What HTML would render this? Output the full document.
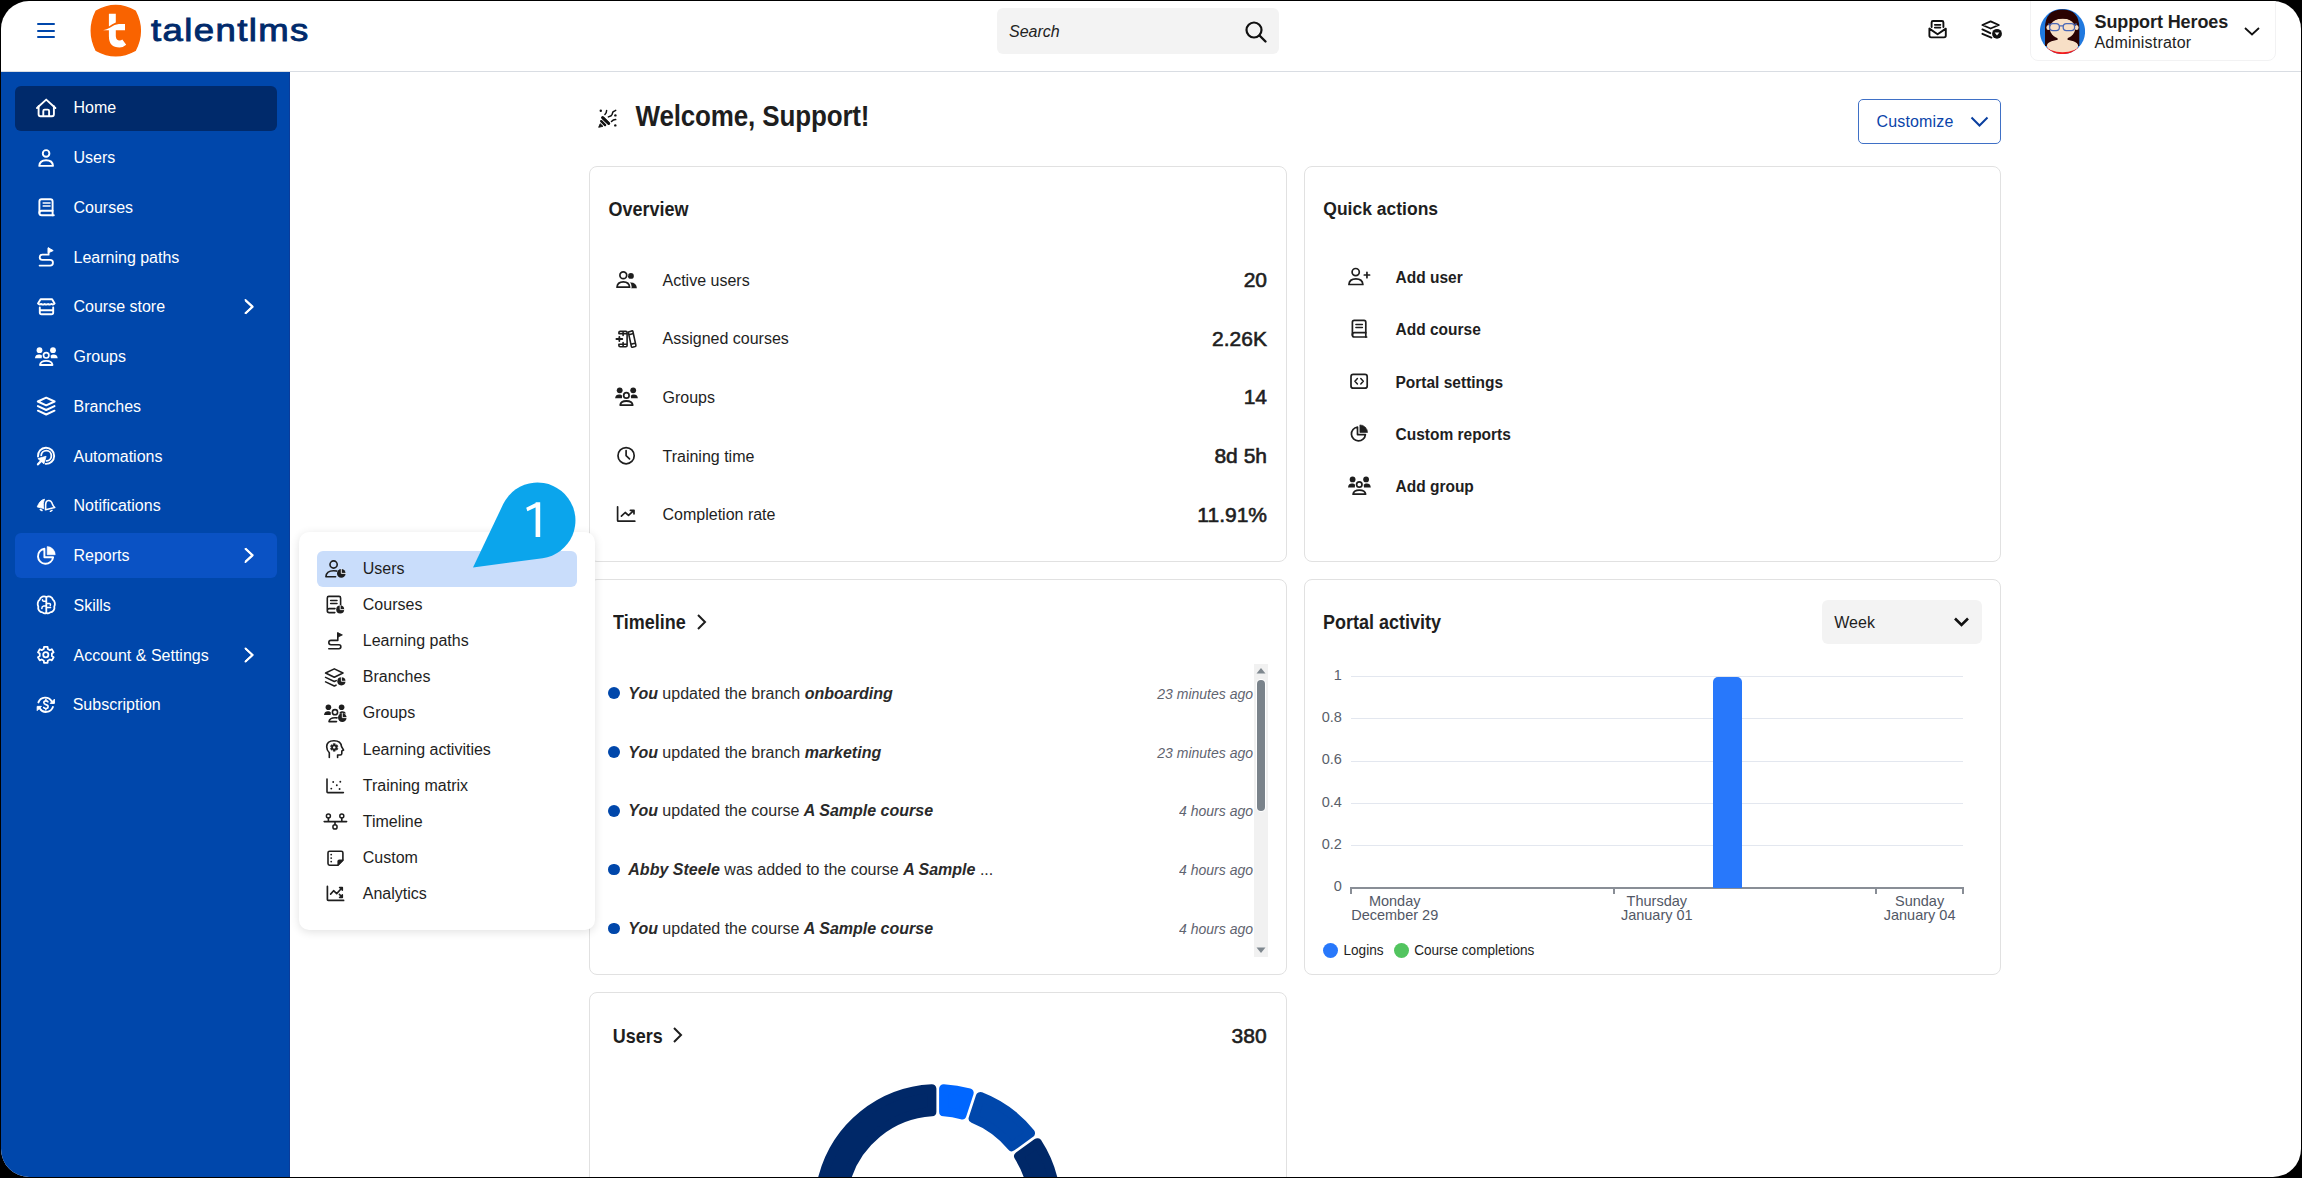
<!DOCTYPE html>
<html><head><meta charset="utf-8"><style>
html,body{margin:0;padding:0;}
body{width:2302px;height:1178px;background:#000;overflow:hidden;position:relative;}
#pg{position:absolute;left:0;top:0;width:2302px;height:1178px;background:#fff;clip-path:inset(1px round 28px);overflow:hidden;font-family:"Liberation Sans",sans-serif;}
.t{position:absolute;line-height:1;white-space:nowrap;}
.r{position:absolute;}
</style></head><body><div id="pg">
<div class="r" style="left:0px;top:71px;width:2302px;height:1px;background:#d9dde3;border-radius:0px;"></div>
<div class="r" style="left:37px;top:22.5px;width:18px;height:2.2px;background:#0047ab;border-radius:1px;"></div>
<div class="r" style="left:37px;top:29.5px;width:18px;height:2.2px;background:#0047ab;border-radius:1px;"></div>
<div class="r" style="left:37px;top:36px;width:18px;height:2.2px;background:#0047ab;border-radius:1px;"></div>
<svg class="r" style="left:0;top:0" width="160" height="70"><path d="M96.2 11.2 Q115.8 0 135.2 11.2 Q145.4 30.8 135.2 50.4 Q115.8 61.2 96.2 50.4 Q86.4 30.8 96.2 11.2 Z" fill="#f96300" stroke="#f96300" stroke-width="1.5" stroke-linejoin="round"/><path d="M108.9 13.8 H115.8 V22.6 Q112.2 24.2 108.9 26.6 Z" fill="#fff"/><path d="M103.1 30.3 Q106.8 29.9 110.2 27.6 Q114.6 24 118.8 23.9 H125 V30.3 H115.8 V36.2 Q116.2 40.6 119.6 40.6 Q121.1 40.6 122.3 39.6 L126.2 44.8 Q123.3 47.5 119.6 47.5 Q108.9 47.5 108.9 36.2 V30.3 Z" fill="#fff"/></svg>
<div class="t" style="left:150.5px;top:15px;font-size:31.5px;color:#002a6b;letter-spacing:1.2px;-webkit-text-stroke:0.9px #002a6b;transform:scale(1.16,1);transform-origin:0 27px;">talentlms</div>
<div class="r" style="left:997px;top:8px;width:282px;height:46px;background:#f3f3f3;border-radius:6px;"></div>
<div class="t" style="left:1009px;top:23.5px;font-size:16px;font-style:italic;color:#222;">Search</div>
<svg class="r" style="left:1244px;top:20px;" width="24" height="24" viewBox="0 0 24 24"><circle cx="10" cy="10" r="7.5" fill="none" stroke="#111" stroke-width="2.2"/><path d="M15.5 15.5 L21.5 21.5" stroke="#111" stroke-width="2.4" stroke-linecap="round"/></svg>
<svg class="r" style="left:0;top:0" width="2302" height="70"><path d="M1931.6 27 V22.4 Q1931.6 21 1933 21 H1942 Q1943.4 21 1943.4 22.4 V27" fill="none" stroke="#111" stroke-width="1.9" stroke-linecap="round"/><path d="M1934.8 24.8 H1940.4 M1934.8 27.6 H1940.4" fill="none" stroke="#111" stroke-width="1.7" stroke-linecap="round"/><path d="M1929.4 28.6 V35.6 Q1929.4 37.4 1931.2 37.4 H1944 Q1945.8 37.4 1945.8 35.6 V28.6 L1937.6 34.3 Z" fill="none" stroke="#111" stroke-width="1.9" stroke-linejoin="round"/><path d="M1990.6 21.4 L1998.8 25 L1990.6 28.5 L1982.4 25 Z" fill="none" stroke="#111" stroke-width="1.9" stroke-linejoin="round"/><path d="M1982.4 29.4 L1990.3 33.2 M1982.4 33.8 L1991.4 37.6" fill="none" stroke="#111" stroke-width="1.9" stroke-linecap="round"/><circle cx="1997" cy="33.8" r="4.9" fill="#111"/><path d="M1994.6 32.4 H1999.4 L1997 35.6 Z" fill="#fff"/></svg>
<div class="r" style="left:2030px;top:-8px;width:245.5px;height:69px;background:#fff;border:1px solid #f2f2f3;box-sizing:border-box;border-radius:8px;"></div>
<svg class="r" style="left:2040px;top:9px;" width="45" height="45" viewBox="0 0 45 45"><defs><clipPath id="av"><circle cx="22.5" cy="22.5" r="22.6"/></clipPath></defs><g clip-path="url(#av)"><rect width="45" height="45" fill="#2079df"/><path d="M5 37 V19 Q5 0.4 22.5 0.4 Q39.3 0.4 39.3 19 V37 Z" fill="#2a0202"/><ellipse cx="22.5" cy="44" rx="19.5" ry="9" fill="#f41c1c"/><ellipse cx="22.5" cy="36.8" rx="15.6" ry="6.4" fill="#f7dfc6"/><rect x="17.6" y="27" width="10" height="9" fill="#f7dfc6"/><ellipse cx="22.5" cy="19.6" rx="12.6" ry="10.4" fill="#f7dfc6"/><ellipse cx="8.4" cy="18.5" rx="2" ry="2.6" fill="#f7dfc6"/><ellipse cx="36.6" cy="18.5" rx="2" ry="2.6" fill="#f7dfc6"/><path d="M8.5 15 Q10 5.5 22.5 5.5 Q35 5.5 36.5 15 Q31 9.6 22.5 9.8 Q14 9.8 8.5 15 Z" fill="#2a0202"/><rect x="9.6" y="14.6" width="9.8" height="7" rx="3.3" fill="none" stroke="#4a68b8" stroke-width="1.3"/><rect x="23.2" y="14.6" width="11.4" height="7" rx="3.3" fill="none" stroke="#4a68b8" stroke-width="1.3"/><path d="M19.4 16.8 H23.2 M8 15.2 H9.8 M34.6 15.2 H37" stroke="#4a68b8" stroke-width="1.2"/></g></svg>
<div class="t" style="left:2094.5px;top:12.5px;font-size:18px;font-weight:bold;color:#1e1e1e;letter-spacing:-0.1px;">Support Heroes</div>
<div class="t" style="left:2094.5px;top:35px;font-size:16px;color:#1e1e1e;letter-spacing:0.2px;">Administrator</div>
<svg class="r" style="left:2243px;top:26px;" width="18" height="11" viewBox="0 0 18 11"><path d="M2 2 L9 8.5 L16 2" fill="none" stroke="#111" stroke-width="1.8"/></svg>
<div class="r" style="left:0px;top:72px;width:290px;height:1106px;background:#0047ab;border-radius:0px;"></div>
<div class="r" style="left:289px;top:72px;width:1px;height:1106px;background:#0a3c9a;border-radius:0px;"></div>
<div class="r" style="left:15px;top:86px;width:262px;height:45px;background:#002a6b;border-radius:6px;"></div>
<div class="r" style="left:15px;top:533px;width:262px;height:44.5px;background:#0a52c4;border-radius:6px;"></div>
<div class="t" style="left:73.5px;top:100px;font-size:16px;color:#fff;">Home</div>
<div class="t" style="left:73.5px;top:150px;font-size:16px;color:#fff;">Users</div>
<div class="t" style="left:73.5px;top:200px;font-size:16px;color:#fff;">Courses</div>
<div class="t" style="left:73.5px;top:250px;font-size:16px;color:#fff;">Learning paths</div>
<div class="t" style="left:73.5px;top:299px;font-size:16px;color:#fff;">Course store</div>
<svg class="r" style="left:243px;top:298.6px;" width="13" height="16" viewBox="0 0 13 16"><path d="M2.5 1.5 L9.5 8 L2.5 14.5" fill="none" stroke="#fff" stroke-width="1.8"/></svg>
<div class="t" style="left:73.5px;top:349px;font-size:16px;color:#fff;">Groups</div>
<div class="t" style="left:73.5px;top:399px;font-size:16px;color:#fff;">Branches</div>
<div class="t" style="left:73.5px;top:449px;font-size:16px;color:#fff;">Automations</div>
<div class="t" style="left:73.5px;top:498px;font-size:16px;color:#fff;">Notifications</div>
<div class="t" style="left:73.5px;top:548px;font-size:16px;color:#fff;">Reports</div>
<svg class="r" style="left:243px;top:547.35px;" width="13" height="16" viewBox="0 0 13 16"><path d="M2.5 1.5 L9.5 8 L2.5 14.5" fill="none" stroke="#fff" stroke-width="1.8"/></svg>
<div class="t" style="left:73.5px;top:598px;font-size:16px;color:#fff;">Skills</div>
<div class="t" style="left:73.5px;top:648px;font-size:16px;color:#fff;">Account &amp; Settings</div>
<svg class="r" style="left:243px;top:646.85px;" width="13" height="16" viewBox="0 0 13 16"><path d="M2.5 1.5 L9.5 8 L2.5 14.5" fill="none" stroke="#fff" stroke-width="1.8"/></svg>
<div class="t" style="left:72.7px;top:697px;font-size:16px;color:#fff;">Subscription</div>
<svg class="r" style="left:0;top:0" width="700" height="140"><path d="M598.7 127.3 L600.2 123.7 L602.9 126.3 Z" fill="#111" stroke="#111" stroke-width="0.9" stroke-linejoin="round"/><path d="M601.2 121.2 L605.1 125.1 M603 117.9 L608.4 123.2" fill="none" stroke="#111" stroke-linecap="round" stroke-width="2.4"/><path d="M602.6 117.6 L608.7 123.5" fill="none" stroke="#111" stroke-linecap="round" stroke-width="3"/><path d="M604.9 114.5 Q606.6 112.8 606.6 110.4 M608.4 116.9 Q611.6 116 612.2 114.2 Q612.5 111.6 614 111.3 L615.7 110.4 M611.5 121.4 Q613.3 119.5 615.7 119.6" fill="none" stroke="#111" stroke-linecap="round" stroke-width="1.5"/><circle cx="600.8" cy="110.7" r="1.2" fill="#111"/><circle cx="615.4" cy="115.4" r="1.2" fill="#111"/><circle cx="615.3" cy="125.4" r="1.2" fill="#111"/></svg>
<div class="t" style="left:635.5px;top:104.3px;font-size:26px;font-weight:bold;color:#1e1e1e;letter-spacing:-0.15px;transform:scale(1,1.1);transform-origin:0 22px;">Welcome, Support!</div>
<div class="r" style="left:1858px;top:99px;width:143px;height:45px;background:#fff;border:1px solid #3f70c6;box-sizing:border-box;border-radius:5px;"></div>
<div class="t" style="left:1876.5px;top:114px;font-size:16px;color:#0a44aa;letter-spacing:0.15px;">Customize</div>
<svg class="r" style="left:1969px;top:114.5px;" width="22" height="14" viewBox="0 0 22 14"><path d="M2.5 2.5 L10.5 10.5 L18.5 2.5" fill="none" stroke="#0a3f9f" stroke-width="2"/></svg>
<div class="r" style="left:589px;top:166px;width:698px;height:396px;background:#fff;border:1px solid #e1e1e1;box-sizing:border-box;border-radius:8px;"></div>
<div class="r" style="left:1304px;top:166px;width:697px;height:396px;background:#fff;border:1px solid #e1e1e1;box-sizing:border-box;border-radius:8px;"></div>
<div class="r" style="left:589px;top:579px;width:698px;height:396px;background:#fff;border:1px solid #e1e1e1;box-sizing:border-box;border-radius:8px;"></div>
<div class="r" style="left:1304px;top:579px;width:697px;height:396px;background:#fff;border:1px solid #e1e1e1;box-sizing:border-box;border-radius:8px;"></div>
<div class="r" style="left:589px;top:992px;width:698px;height:220px;background:#fff;border:1px solid #e1e1e1;box-sizing:border-box;border-radius:8px;"></div>
<div class="t" style="left:608.5px;top:200.5px;font-size:18px;font-weight:bold;color:#1e1e1e;transform:scale(1,1.08);transform-origin:0 15px;">Overview</div>
<div class="t" style="left:662.5px;top:273px;font-size:16px;color:#1e1e1e;">Active users</div>
<div class="t" style="right:1035px;top:269px;font-size:21px;color:#1e1e1e;-webkit-text-stroke:0.6px #1e1e1e;">20</div>
<div class="t" style="left:662.5px;top:331px;font-size:16px;color:#1e1e1e;">Assigned courses</div>
<div class="t" style="right:1035px;top:328px;font-size:21px;color:#1e1e1e;-webkit-text-stroke:0.6px #1e1e1e;">2.26K</div>
<div class="t" style="left:662.5px;top:390px;font-size:16px;color:#1e1e1e;">Groups</div>
<div class="t" style="right:1035px;top:386px;font-size:21px;color:#1e1e1e;-webkit-text-stroke:0.6px #1e1e1e;">14</div>
<div class="t" style="left:662.5px;top:449px;font-size:16px;color:#1e1e1e;">Training time</div>
<div class="t" style="right:1035px;top:445px;font-size:21px;color:#1e1e1e;-webkit-text-stroke:0.6px #1e1e1e;">8d 5h</div>
<div class="t" style="left:662.5px;top:507px;font-size:16px;color:#1e1e1e;">Completion rate</div>
<div class="t" style="right:1035px;top:504px;font-size:21px;color:#1e1e1e;-webkit-text-stroke:0.6px #1e1e1e;">11.91%</div>
<div class="t" style="left:1323.3px;top:200.5px;font-size:17.5px;font-weight:bold;color:#1e1e1e;transform:scale(1,1.09);transform-origin:0 15px;">Quick actions</div>
<div class="t" style="left:1395.5px;top:270px;font-size:15.5px;font-weight:bold;color:#1e1e1e;transform:scale(1,1.07);transform-origin:0 13px;">Add user</div>
<div class="t" style="left:1395.5px;top:322px;font-size:15.5px;font-weight:bold;color:#1e1e1e;transform:scale(1,1.07);transform-origin:0 13px;">Add course</div>
<div class="t" style="left:1395.5px;top:375px;font-size:15.5px;font-weight:bold;color:#1e1e1e;transform:scale(1,1.07);transform-origin:0 13px;">Portal settings</div>
<div class="t" style="left:1395.5px;top:427px;font-size:15.5px;font-weight:bold;color:#1e1e1e;transform:scale(1,1.07);transform-origin:0 13px;">Custom reports</div>
<div class="t" style="left:1395.5px;top:479px;font-size:15.5px;font-weight:bold;color:#1e1e1e;transform:scale(1,1.07);transform-origin:0 13px;">Add group</div>
<div class="t" style="left:613px;top:614px;font-size:18px;font-weight:bold;color:#1e1e1e;transform:scale(1,1.13);transform-origin:0 15px;">Timeline</div>
<svg class="r" style="left:695px;top:613px;" width="14" height="18" viewBox="0 0 14 18"><path d="M3 2 L10 9 L3 16" fill="none" stroke="#1e1e1e" stroke-width="2"/></svg>
<div class="r" style="left:608px;top:687.45px;width:11.5px;height:11.5px;background:#0047ab;border-radius:6px;"></div>
<div class="t" style="left:628.3px;top:686px;font-size:16px;color:#2a2a2a;"><i><b>You</b></i> updated the branch <i><b>onboarding</b></i></div>
<div class="t" style="right:1049px;top:687px;font-size:14px;font-style:italic;color:#5f6470;transform:scale(1,1.05);transform-origin:0 12px;">23 minutes ago</div>
<div class="r" style="left:608px;top:746.25px;width:11.5px;height:11.5px;background:#0047ab;border-radius:6px;"></div>
<div class="t" style="left:628.3px;top:745px;font-size:16px;color:#2a2a2a;"><i><b>You</b></i> updated the branch <i><b>marketing</b></i></div>
<div class="t" style="right:1049px;top:746px;font-size:14px;font-style:italic;color:#5f6470;transform:scale(1,1.05);transform-origin:0 12px;">23 minutes ago</div>
<div class="r" style="left:608px;top:805.0500000000001px;width:11.5px;height:11.5px;background:#0047ab;border-radius:6px;"></div>
<div class="t" style="left:628.3px;top:803px;font-size:16px;color:#2a2a2a;"><i><b>You</b></i> updated the course <i><b>A Sample course</b></i></div>
<div class="t" style="right:1049px;top:804px;font-size:14px;font-style:italic;color:#5f6470;transform:scale(1,1.05);transform-origin:0 12px;">4 hours ago</div>
<div class="r" style="left:608px;top:863.85px;width:11.5px;height:11.5px;background:#0047ab;border-radius:6px;"></div>
<div class="t" style="left:628.3px;top:862px;font-size:16px;color:#2a2a2a;"><i><b>Abby Steele</b></i> was added to the course <i><b>A Sample</b></i> ...</div>
<div class="t" style="right:1049px;top:863px;font-size:14px;font-style:italic;color:#5f6470;transform:scale(1,1.05);transform-origin:0 12px;">4 hours ago</div>
<div class="r" style="left:608px;top:922.6500000000001px;width:11.5px;height:11.5px;background:#0047ab;border-radius:6px;"></div>
<div class="t" style="left:628.3px;top:921px;font-size:16px;color:#2a2a2a;"><i><b>You</b></i> updated the course <i><b>A Sample course</b></i></div>
<div class="t" style="right:1049px;top:922px;font-size:14px;font-style:italic;color:#5f6470;transform:scale(1,1.05);transform-origin:0 12px;">4 hours ago</div>
<div class="r" style="left:1254px;top:664px;width:14px;height:293px;background:#f1f1f1;border-radius:0px;"></div>
<div class="r" style="left:1257px;top:680px;width:8px;height:131px;background:#7a838b;border-radius:4px;box-shadow:0 0 0 1px #fff;"></div>
<svg class="r" style="left:1255px;top:666px;" width="12" height="10" viewBox="0 0 12 10"><path d="M6 2 L10.5 7.5 L1.5 7.5 Z" fill="#7f888f"/></svg>
<svg class="r" style="left:1255px;top:945px;" width="12" height="10" viewBox="0 0 12 10"><path d="M6 8 L10.5 2.5 L1.5 2.5 Z" fill="#7f888f"/></svg>
<div class="t" style="left:1323px;top:614px;font-size:18px;font-weight:bold;color:#1e1e1e;transform:scale(1,1.13);transform-origin:0 15px;">Portal activity</div>
<div class="r" style="left:1822px;top:600px;width:160px;height:44px;background:#f3f3f3;border-radius:6px;"></div>
<div class="t" style="left:1834.3px;top:615px;font-size:16px;color:#1e1e1e;">Week</div>
<svg class="r" style="left:1953px;top:616px;" width="17" height="12" viewBox="0 0 17 12"><path d="M2 2.5 L8.5 9 L15 2.5" fill="none" stroke="#111" stroke-width="2.6"/></svg>
<div class="r" style="left:1350.5px;top:676.0px;width:612.5px;height:1px;background:#e3e7ef;border-radius:0px;"></div>
<div class="t" style="right:960.2px;top:668px;font-size:14.5px;color:#5a5f6a;transform:scale(1,1.04);transform-origin:0 12px;">1</div>
<div class="r" style="left:1350.5px;top:718.25px;width:612.5px;height:1px;background:#e3e7ef;border-radius:0px;"></div>
<div class="t" style="right:960.2px;top:710px;font-size:14.5px;color:#5a5f6a;transform:scale(1,1.04);transform-origin:0 12px;">0.8</div>
<div class="r" style="left:1350.5px;top:760.5px;width:612.5px;height:1px;background:#e3e7ef;border-radius:0px;"></div>
<div class="t" style="right:960.2px;top:752px;font-size:14.5px;color:#5a5f6a;transform:scale(1,1.04);transform-origin:0 12px;">0.6</div>
<div class="r" style="left:1350.5px;top:802.75px;width:612.5px;height:1px;background:#e3e7ef;border-radius:0px;"></div>
<div class="t" style="right:960.2px;top:795px;font-size:14.5px;color:#5a5f6a;transform:scale(1,1.04);transform-origin:0 12px;">0.4</div>
<div class="r" style="left:1350.5px;top:845.0px;width:612.5px;height:1px;background:#e3e7ef;border-radius:0px;"></div>
<div class="t" style="right:960.2px;top:837px;font-size:14.5px;color:#5a5f6a;transform:scale(1,1.04);transform-origin:0 12px;">0.2</div>
<div class="t" style="right:960.2px;top:879px;font-size:14.5px;color:#5a5f6a;transform:scale(1,1.04);transform-origin:0 12px;">0</div>
<div class="r" style="left:1350px;top:887px;width:614px;height:2px;background:#898e96;border-radius:0px;"></div>
<div class="r" style="left:1349.5px;top:887px;width:2px;height:7px;background:#898e96;border-radius:0px;"></div>
<div class="r" style="left:1613px;top:887px;width:2px;height:7px;background:#898e96;border-radius:0px;"></div>
<div class="r" style="left:1875px;top:887px;width:2px;height:7px;background:#898e96;border-radius:0px;"></div>
<div class="r" style="left:1962px;top:887px;width:2px;height:7px;background:#898e96;border-radius:0px;"></div>
<div class="r" style="left:1712.5px;top:677px;width:29px;height:211px;background:#2878fb;border-radius:0px;border-radius:5px 5px 0 0;"></div>
<div class="t" style="left:1094.7px;width:600px;text-align:center;top:894px;font-size:14.5px;color:#525866;">Monday</div>
<div class="t" style="left:1094.7px;width:600px;text-align:center;top:908px;font-size:14.5px;color:#525866;">December 29</div>
<div class="t" style="left:1356.8px;width:600px;text-align:center;top:894px;font-size:14.5px;color:#525866;">Thursday</div>
<div class="t" style="left:1356.8px;width:600px;text-align:center;top:908px;font-size:14.5px;color:#525866;">January 01</div>
<div class="t" style="left:1619.6px;width:600px;text-align:center;top:894px;font-size:14.5px;color:#525866;">Sunday</div>
<div class="t" style="left:1619.6px;width:600px;text-align:center;top:908px;font-size:14.5px;color:#525866;">January 04</div>
<div class="r" style="left:1323px;top:942.5px;width:15px;height:15px;background:#2878fb;border-radius:8px;"></div>
<div class="t" style="left:1343.5px;top:944px;font-size:13.6px;color:#1e1e1e;transform:scale(1,1.08);transform-origin:0 11px;">Logins</div>
<div class="r" style="left:1394px;top:942.5px;width:15px;height:15px;background:#52c45f;border-radius:8px;"></div>
<div class="t" style="left:1414.2px;top:944px;font-size:13.6px;color:#1e1e1e;transform:scale(1,1.08);transform-origin:0 11px;">Course completions</div>
<div class="t" style="left:612.8px;top:1027.6px;font-size:18px;font-weight:bold;color:#1e1e1e;transform:scale(1,1.13);transform-origin:0 15px;">Users</div>
<svg class="r" style="left:671px;top:1026px;" width="14" height="18" viewBox="0 0 14 18"><path d="M3 2 L10 9 L3 16" fill="none" stroke="#1e1e1e" stroke-width="2"/></svg>
<div class="t" style="right:1035.4px;top:1024.6px;font-size:21px;color:#1e1e1e;-webkit-text-stroke:0.6px #1e1e1e;">380</div>
<svg class="r" style="left:0;top:0" width="2302" height="1178"><path d="M37 108 L46.2 99.6 L55.4 108" fill="none" stroke="#ffffff" stroke-width="1.9" stroke-linecap="round" stroke-linejoin="round"/>
<path d="M38.6 106.3 V114.3 Q38.6 116.2 40.5 116.2 H52 Q53.9 116.2 53.9 114.3 V106.3" fill="none" stroke="#ffffff" stroke-width="1.9" stroke-linecap="round" stroke-linejoin="round"/>
<path d="M43.3 116 V111 Q43.3 109.6 44.6 109.6 H47.8 Q49.1 109.6 49.1 111 V116" fill="none" stroke="#ffffff" stroke-width="1.9" stroke-linecap="round" stroke-linejoin="round"/>
<circle cx="46.1" cy="153.4" r="3.3" fill="none" stroke="#ffffff" stroke-width="1.9" stroke-linecap="round" stroke-linejoin="round"/>
<path d="M39.3 165.9 Q39.6 160.3 46.1 160.3 Q52.6 160.3 53 165.9 Z" fill="none" stroke="#ffffff" stroke-width="1.9" stroke-linecap="round" stroke-linejoin="round"/>
<path d="M52.6 210.8 V201.4 Q52.6 199.2 50.4 199.2 H41.6 Q39.4 199.2 39.4 201.4 V213 Q39.4 215.3 41.7 215.3 H53.8" fill="none" stroke="#ffffff" stroke-width="1.9" stroke-linecap="round" stroke-linejoin="round"/>
<path d="M52.6 215.3 V210.8 H41.6 Q39.4 210.8 39.4 213" fill="none" stroke="#ffffff" stroke-width="1.9" stroke-linecap="round" stroke-linejoin="round"/>
<path d="M43.2 203 H50 M43.2 206 H50" fill="none" stroke="#ffffff" stroke-width="1.6" stroke-linecap="round" stroke-linejoin="round"/>
<path d="M48.6 248.5 V254.7 H42.3 A2.6 2.6 0 0 0 42.3 259.9 H50.1 A2.85 2.85 0 0 1 50.1 265.6 H39.6" fill="none" stroke="#ffffff" stroke-width="1.8" stroke-linecap="round" stroke-linejoin="round"/>
<path d="M48.2 247.8 L53.2 250.6 L48.2 252.8 Z" fill="#ffffff" stroke="#ffffff" stroke-width="1" stroke-linejoin="round"/>
<path d="M40.6 299.3 H52.1 L54.6 303.4 Q53.3 305.2 51.4 303.9 Q49.8 305.3 48.1 303.9 Q46.5 305.3 44.7 303.9 Q43 305.3 41.3 303.9 Q39.4 305.2 38 303.4 Z" fill="none" stroke="#ffffff" stroke-width="1.9" stroke-linecap="round" stroke-linejoin="round"/>
<path d="M39.8 307.4 V312.5 Q39.8 314.3 41.6 314.3 H51.4 Q53.2 314.3 53.2 312.5 V307.4 M39.8 310.3 H53.2" fill="none" stroke="#ffffff" stroke-width="1.9" stroke-linecap="round" stroke-linejoin="round"/>
<circle cx="39.5" cy="350.2" r="2.9" fill="#ffffff"/><circle cx="53" cy="350.2" r="2.9" fill="#ffffff"/>
<path d="M34.9 358.2 C35.2 355.4 36.8 354.4 38.8 354.4 C40.2 354.4 41.3 354.8 42 355.6 L41.7 358.2 Z" fill="#ffffff"/>
<path d="M57.7 358.2 C57.4 355.4 55.8 354.4 53.8 354.4 C52.4 354.4 51.3 354.8 50.6 355.6 L50.9 358.2 Z" fill="#ffffff"/>
<circle cx="46.2" cy="355.3" r="2.7" fill="none" stroke="#ffffff" stroke-width="1.7" stroke-linecap="round" stroke-linejoin="round"/>
<path d="M40 365 Q40.6 360.9 46.2 360.9 Q51.9 360.9 52.5 365 Z" fill="none" stroke="#ffffff" stroke-width="1.8" stroke-linecap="round" stroke-linejoin="round"/>
<path d="M46.2 397.7 L54.6 401.5 L46.2 405.3 L37.8 401.5 Z M37.9 406.1 L46.2 410 L54.5 406.1 M37.9 410.7 L46.2 414.5 L54.5 410.7" fill="none" stroke="#ffffff" stroke-width="2" stroke-linecap="round" stroke-linejoin="round"/>
<path d="M38 456.5 A8.1 8.1 0 1 1 45.6 463.9" fill="none" stroke="#ffffff" stroke-width="1.9" stroke-linecap="round" stroke-linejoin="round"/>
<path d="M41.2 455.4 A5.1 5.1 0 1 1 46.6 460.9" fill="none" stroke="#ffffff" stroke-width="1.8" stroke-linecap="round" stroke-linejoin="round"/>
<path d="M46.1 456.3 L37.9 458.6 L43.9 463.8 Z" fill="#ffffff" stroke="#ffffff" stroke-width="0.8" stroke-linejoin="round"/>
<path d="M41.3 460.8 L38 464.3" fill="none" stroke="#ffffff" stroke-width="2.3" stroke-linecap="round" stroke-linejoin="round"/>
<path d="M37.2 506.9 C39 503 40.6 499.8 44.6 499.2 C43.3 501.8 42.9 505.2 43.8 508.6 Z" fill="#ffffff" stroke="#ffffff" stroke-width="0.8" stroke-linejoin="round"/>
<path d="M40.3 509.5 L42 510.5" fill="none" stroke="#ffffff" stroke-width="1.5" stroke-linecap="round" stroke-linejoin="round"/>
<path d="M45.5 509.7 C46.1 506 44.6 502.3 47.2 500.9 C50 499.5 51.8 501.9 52.4 504 C53.1 506.2 53.9 506.8 54.7 507.5 Z" fill="none" stroke="#ffffff" stroke-width="1.6" stroke-linecap="round" stroke-linejoin="round"/>
<path d="M50.4 511.3 L52 510.4" fill="none" stroke="#ffffff" stroke-width="1.5" stroke-linecap="round" stroke-linejoin="round"/>
<path d="M47.2 546.6 A8.1 8.1 0 0 1 55.2 554.7 H47.2 Z" fill="#ffffff" stroke="#ffffff" stroke-width="0.6"/>
<path d="M44.4 548.7 V557.3 H53.1 A7.6 7.6 0 1 1 44.4 548.7 Z" fill="none" stroke="#ffffff" stroke-width="1.9" stroke-linecap="round" stroke-linejoin="round"/>
<path d="M46.3 597 C44 595.5 40.5 596.5 39.6 599.8 C37.6 601 37.2 604.5 38.3 606.5 C37.6 609.5 39.6 612.4 42.5 612.4 C44 613.7 45.5 613.5 46.3 612.6 C47.1 613.5 48.6 613.7 50.1 612.4 C53 612.4 55 609.5 54.3 606.5 C55.4 604.5 55 601 53 599.8 C52.1 596.5 48.6 595.5 46.3 597 Z M46.3 597.5 V612.3" fill="none" stroke="#ffffff" stroke-width="1.8" stroke-linecap="round" stroke-linejoin="round"/>
<path d="M46 601.2 H43.8 Q42.4 601.2 42.5 599.8 M46 606 H43.6 Q41.9 606.3 41.8 608.6 M46.6 603.5 H49.3 Q50.9 603.6 50.3 605.4 M46.6 607.6 H50.6" fill="none" stroke="#ffffff" stroke-width="1.5" stroke-linecap="round" stroke-linejoin="round"/>
<path d="M43.82 648.92 L44.01 646.80 L47.59 646.80 L47.78 648.92 L49.90 650.15 L51.84 649.25 L53.62 652.35 L51.88 653.57 L51.88 656.03 L53.62 657.25 L51.84 660.35 L49.90 659.45 L47.78 660.68 L47.59 662.80 L44.01 662.80 L43.82 660.68 L41.70 659.45 L39.76 660.35 L37.98 657.25 L39.72 656.03 L39.72 653.57 L37.98 652.35 L39.76 649.25 L41.70 650.15 Z" fill="none" stroke="#ffffff" stroke-width="1.8" stroke-linecap="round" stroke-linejoin="round"/>
<circle cx="45.8" cy="654.8" r="2.6" fill="none" stroke="#ffffff" stroke-width="1.8" stroke-linecap="round" stroke-linejoin="round"/>
<path d="M38.4 702.4 A7.3 7.3 0 0 1 51.6 701.3" fill="none" stroke="#ffffff" stroke-width="1.9" stroke-linecap="round" stroke-linejoin="round"/>
<path d="M50.2 703.4 L54.4 703.4 L54.4 699.2 Z" fill="#ffffff" stroke="#ffffff" stroke-width="1" stroke-linejoin="round"/>
<path d="M52.9 707 A7.3 7.3 0 0 1 39.8 708.5" fill="none" stroke="#ffffff" stroke-width="1.9" stroke-linecap="round" stroke-linejoin="round"/>
<path d="M41.4 706.4 L37.2 706.4 L37.2 710.6 Z" fill="#ffffff" stroke="#ffffff" stroke-width="1" stroke-linejoin="round"/>
<path d="M47.9 701.9 Q47.4 700.9 45.9 700.9 Q43.8 700.9 43.8 702.6 Q43.8 704.2 45.9 704.6 Q48.1 705 48.1 706.8 Q48.1 708.5 45.9 708.5 Q44.3 708.5 43.7 707.5 M45.9 699.4 V700.9 M45.9 708.5 V710" fill="none" stroke="#ffffff" stroke-width="1.6" stroke-linecap="round" stroke-linejoin="round"/>
<path d="M245.4 299.9 L252.6 306.5 L245.4 313.1" fill="none" stroke="#ffffff" stroke-width="1.8" stroke-linecap="round" stroke-linejoin="round"/>
<path d="M245.4 548.9 L252.6 555.5 L245.4 562.1" fill="none" stroke="#ffffff" stroke-width="1.8" stroke-linecap="round" stroke-linejoin="round"/>
<path d="M245.4 648.4 L252.6 655 L245.4 661.6" fill="none" stroke="#ffffff" stroke-width="1.8" stroke-linecap="round" stroke-linejoin="round"/><circle cx="630.9" cy="275.9" r="2.95" fill="#1e1e1e"/>
<path d="M624 288.2 Q624.5 282.5 630.6 282.5 Q636.5 282.5 636.9 288.2 Z" fill="#1e1e1e"/>
<circle cx="623.3" cy="275.3" r="4.9" fill="#fff"/>
<path d="M617 287.2 Q617.4 281.9 623.3 281.9 Q629.2 281.9 629.6 287.2 Z" fill="#fff" stroke="#fff" stroke-width="4.2" stroke-linejoin="round"/>
<circle cx="623.3" cy="275.3" r="3.4" fill="none" stroke="#1e1e1e" stroke-width="1.7" stroke-linecap="round" stroke-linejoin="round"/>
<path d="M617 287.2 Q617.4 281.9 623.3 281.9 Q629.2 281.9 629.6 287.2 Z" fill="none" stroke="#1e1e1e" stroke-width="1.7" stroke-linecap="round" stroke-linejoin="round"/>
<path d="M618.9 333.6 V332.4 Q618.9 331.2 620.1 331.2 H625.9 Q627.1 331.2 627.1 332.4 V345.5 Q627.1 346.7 625.9 346.7 H620.1 Q618.9 346.7 618.9 345.5 V344.3 M618.9 333.6 H627.1 M618.9 344.3 H627.1 M623.1 331.2 V335.4 M623.1 342.6 V346.7" fill="none" stroke="#1e1e1e" stroke-width="1.6" stroke-linecap="round" stroke-linejoin="round"/>
<path d="M616.4 339 H622.3 M619.35 336.9 V341.1" fill="none" stroke="#1e1e1e" stroke-width="1.8" stroke-linecap="round" stroke-linejoin="round"/>
<path d="M628.4 332 L631.8 330.9 Q632.7 330.7 632.9 331.5 L635.9 345.3 Q636.1 346.2 635.2 346.5 L632.5 347.2 Q631.6 347.4 631.4 346.6 L628.4 332.6 Z M629.1 334.7 L632.5 333.8 M631.2 344.2 L634.7 343.3" fill="none" stroke="#1e1e1e" stroke-width="1.6" stroke-linecap="round" stroke-linejoin="round"/>
<circle cx="619.70" cy="390.30" r="2.90" fill="#1e1e1e"/>
<circle cx="633.20" cy="390.30" r="2.90" fill="#1e1e1e"/>
<path d="M615.10 398.30 C615.40 395.50 617.00 394.50 619.00 394.50 C620.40 394.50 621.50 394.90 622.20 395.70 L621.90 398.30 Z" fill="#1e1e1e"/>
<path d="M637.90 398.30 C637.60 395.50 636.00 394.50 634.00 394.50 C632.60 394.50 631.50 394.90 630.80 395.70 L631.10 398.30 Z" fill="#1e1e1e"/>
<circle cx="626.40" cy="395.40" r="2.70" fill="none" stroke="#1e1e1e" stroke-width="1.7" stroke-linecap="round" stroke-linejoin="round"/>
<path d="M620.20 405.10 Q620.80 401.00 626.40 401.00 Q632.10 401.00 632.70 405.10 Z" fill="none" stroke="#1e1e1e" stroke-width="1.8" stroke-linecap="round" stroke-linejoin="round"/>
<circle cx="1352.60" cy="479.40" r="2.90" fill="#1e1e1e"/>
<circle cx="1366.10" cy="479.40" r="2.90" fill="#1e1e1e"/>
<path d="M1348.00 487.40 C1348.30 484.60 1349.90 483.60 1351.90 483.60 C1353.30 483.60 1354.40 484.00 1355.10 484.80 L1354.80 487.40 Z" fill="#1e1e1e"/>
<path d="M1370.80 487.40 C1370.50 484.60 1368.90 483.60 1366.90 483.60 C1365.50 483.60 1364.40 484.00 1363.70 484.80 L1364.00 487.40 Z" fill="#1e1e1e"/>
<circle cx="1359.30" cy="484.50" r="2.70" fill="none" stroke="#1e1e1e" stroke-width="1.7" stroke-linecap="round" stroke-linejoin="round"/>
<path d="M1353.10 494.20 Q1353.70 490.10 1359.30 490.10 Q1365.00 490.10 1365.60 494.20 Z" fill="none" stroke="#1e1e1e" stroke-width="1.8" stroke-linecap="round" stroke-linejoin="round"/>
<circle cx="626.1" cy="455.7" r="8.1" fill="none" stroke="#1e1e1e" stroke-width="1.7" stroke-linecap="round" stroke-linejoin="round"/><path d="M626.1 450.6 V455.7 L629.5 458.9" fill="none" stroke="#1e1e1e" stroke-width="1.7" stroke-linecap="round" stroke-linejoin="round"/>
<path d="M617.6 506.8 V520.4 Q617.6 521.2 618.4 521.2 H634.8" fill="none" stroke="#1e1e1e" stroke-width="1.7" stroke-linecap="round" stroke-linejoin="round"/>
<path d="M621.4 516.2 L625.2 512.5 L628.5 515.3 L633.6 510.6 M630.4 510.3 H634 V513.8" fill="none" stroke="#1e1e1e" stroke-width="1.7" stroke-linecap="round" stroke-linejoin="round"/>
<circle cx="1355.7" cy="272.1" r="3.6" fill="none" stroke="#1e1e1e" stroke-width="1.7" stroke-linecap="round" stroke-linejoin="round"/>
<path d="M1348.9 284.5 Q1349.4 278.9 1355.9 278.9 Q1362.4 278.9 1362.9 284.5 Z" fill="none" stroke="#1e1e1e" stroke-width="1.7" stroke-linecap="round" stroke-linejoin="round"/>
<path d="M1364.3 275 H1369.6 M1366.95 272.3 V277.7" fill="none" stroke="#1e1e1e" stroke-width="1.7" stroke-linecap="round" stroke-linejoin="round"/>
<path d="M1365.8 332.7 V322.2 Q1365.8 320.4 1364 320.4 H1354.2 Q1352.4 320.4 1352.4 322.2 V335 Q1352.4 337 1354.4 337 H1366.6" fill="none" stroke="#1e1e1e" stroke-width="1.7" stroke-linecap="round" stroke-linejoin="round"/>
<path d="M1365.8 337 V332.7 H1354.4 Q1352.4 332.7 1352.4 335" fill="none" stroke="#1e1e1e" stroke-width="1.7" stroke-linecap="round" stroke-linejoin="round"/>
<path d="M1355.9 324.4 H1362.4 M1355.9 327.4 H1362.4" fill="none" stroke="#1e1e1e" stroke-width="1.5" stroke-linecap="round" stroke-linejoin="round"/>
<rect x="1351" y="374.4" width="16.2" height="13.8" rx="2.3" fill="none" stroke="#1e1e1e" stroke-width="1.7" stroke-linecap="round" stroke-linejoin="round"/>
<path d="M1357.4 378.6 L1354.9 381.3 L1357.4 384 M1360.8 378.6 L1363.3 381.3 L1360.8 384" fill="none" stroke="#1e1e1e" stroke-width="1.5" stroke-linecap="round" stroke-linejoin="round"/>
<path d="M1359.9 424.9 A7.6 7.6 0 0 1 1367.5 432.5 H1359.9 Z" fill="#1e1e1e" stroke="#1e1e1e" stroke-width="0.6"/>
<path d="M1357.5 427 V434.6 H1365.4 A7 7 0 1 1 1357.5 427 Z" fill="none" stroke="#1e1e1e" stroke-width="1.7" stroke-linecap="round" stroke-linejoin="round"/><path d="M873.32 1306.99 A118.7 118.7 0 0 1 931.80 1088.75 L931.80 1111.78 A95.69999999999999 95.69999999999999 0 0 0 884.84 1287.05 Z" fill="#002868" stroke="#002868" stroke-width="9.2" stroke-linejoin="round"/>
<path d="M943.70 1088.75 A118.7 118.7 0 0 1 969.13 1092.82 L961.93 1114.71 A95.69999999999999 95.69999999999999 0 0 0 943.70 1111.78 Z" fill="#0066ff" stroke="#0066ff" stroke-width="9.2" stroke-linejoin="round"/>
<path d="M980.43 1096.54 A118.7 118.7 0 0 1 1030.42 1133.13 L1011.74 1146.60 A95.69999999999999 95.69999999999999 0 0 0 973.23 1118.42 Z" fill="#0047ab" stroke="#0047ab" stroke-width="9.2" stroke-linejoin="round"/>
<path d="M1037.38 1142.78 A118.7 118.7 0 0 1 983.89 1316.67 L976.01 1295.02 A95.69999999999999 95.69999999999999 0 0 0 1018.70 1156.25 Z" fill="#002868" stroke="#002868" stroke-width="9.2" stroke-linejoin="round"/></svg>
<div class="r" style="left:299px;top:532px;width:296px;height:398px;background:#fff;border-radius:10px;box-shadow:0 2px 10px rgba(0,0,0,0.12);"></div>
<div class="r" style="left:317px;top:551px;width:260px;height:36px;background:#c9ddfb;border-radius:6px;"></div>
<div class="t" style="left:362.8px;top:561px;font-size:16px;color:#1e1e1e;">Users</div>
<div class="t" style="left:362.8px;top:597px;font-size:16px;color:#1e1e1e;">Courses</div>
<div class="t" style="left:362.8px;top:633px;font-size:16px;color:#1e1e1e;">Learning paths</div>
<div class="t" style="left:362.8px;top:669px;font-size:16px;color:#1e1e1e;">Branches</div>
<div class="t" style="left:362.8px;top:705px;font-size:16px;color:#1e1e1e;">Groups</div>
<div class="t" style="left:362.8px;top:742px;font-size:16px;color:#1e1e1e;">Learning activities</div>
<div class="t" style="left:362.8px;top:778px;font-size:16px;color:#1e1e1e;">Training matrix</div>
<div class="t" style="left:362.8px;top:814px;font-size:16px;color:#1e1e1e;">Timeline</div>
<div class="t" style="left:362.8px;top:850px;font-size:16px;color:#1e1e1e;">Custom</div>
<div class="t" style="left:362.8px;top:886px;font-size:16px;color:#1e1e1e;">Analytics</div>
<svg class="r" style="left:0;top:0" width="2302" height="1178"><circle cx="333.6" cy="564.5" r="3.6" fill="none" stroke="#1e1e1e" stroke-width="1.6" stroke-linecap="round" stroke-linejoin="round"/>
<path d="M325.9 576.7 Q326.3 570.7 333.6 570.7 Q335.4 570.7 336.6 571.1 M325.9 576.7 H335.6" fill="none" stroke="#1e1e1e" stroke-width="1.6" stroke-linecap="round" stroke-linejoin="round"/>
<circle cx="341.3" cy="573.4" r="4.3" fill="#1e1e1e"/><path d="M341.3 568.6 V573.4 H346.1" fill="none" stroke="#fff" stroke-width="0.9"/>
<path d="M340.6 605.8 V598 Q340.6 596.4 339 596.4 H328.9 Q327.3 596.4 327.3 598 V610.7 Q327.3 612.6 329.2 612.6 H334.8 M335 608.6 H329.2 Q327.3 608.6 327.3 610.7" fill="none" stroke="#1e1e1e" stroke-width="1.6" stroke-linecap="round" stroke-linejoin="round"/>
<path d="M330.6 600.4 H337 M330.6 603.4 H337" fill="none" stroke="#1e1e1e" stroke-width="1.5" stroke-linecap="round" stroke-linejoin="round"/>
<circle cx="340.2" cy="609.6" r="4.0" fill="#1e1e1e"/><path d="M340.2 605.1 V609.6 H344.7" fill="none" stroke="#fff" stroke-width="0.9"/>
<path d="M337.8 633.2 V640.4 H331 A2.2 2.2 0 0 0 331 644.8 H338.9 A1.95 1.95 0 0 1 338.9 648.7 H328.8" fill="none" stroke="#1e1e1e" stroke-width="1.6" stroke-linecap="round" stroke-linejoin="round"/>
<path d="M337.6 632.6 L342.4 634.9 L337.6 637.3 Z" fill="#1e1e1e" stroke="#1e1e1e" stroke-width="0.8" stroke-linejoin="round"/>
<path d="M334.3 668.9 L343 673 L334.3 677.2 L325.6 673 Z M325.6 677.4 L334.3 681.5 L336.2 680.6 M325.6 681.9 L334.3 686 L336 685.2" fill="none" stroke="#1e1e1e" stroke-width="1.6" stroke-linecap="round" stroke-linejoin="round"/>
<circle cx="341.4" cy="681.3" r="4.1" fill="#1e1e1e"/><path d="M341.4 676.6999999999999 V681.3 H346.0" fill="none" stroke="#fff" stroke-width="0.9"/>
<circle cx="328.4" cy="707.2" r="2.8" fill="#1e1e1e"/><circle cx="341.6" cy="707.2" r="2.8" fill="#1e1e1e"/>
<path d="M324 715 C324.3 712.3 325.9 711.3 327.8 711.3 C329.2 711.3 330.2 711.7 330.9 712.4 L330.7 715 Z" fill="#1e1e1e"/>
<path d="M345.9 713.5 C345.3 712 344.2 711.3 342.6 711.3 C341.3 711.3 340.2 711.7 339.5 712.4 L339.7 713.8 Z" fill="#1e1e1e"/>
<circle cx="335" cy="712.2" r="2.6" fill="none" stroke="#1e1e1e" stroke-width="1.6" stroke-linecap="round" stroke-linejoin="round"/>
<path d="M329 721.6 Q329.6 717.7 335 717.7 Q336.2 717.7 337 717.9 M329 721.6 H336.5" fill="none" stroke="#1e1e1e" stroke-width="1.6" stroke-linecap="round" stroke-linejoin="round"/>
<circle cx="342.3" cy="717.6" r="4.3" fill="#1e1e1e"/><path d="M342.3 712.8000000000001 V717.6 H347.1" fill="none" stroke="#fff" stroke-width="0.9"/>
<path d="M329.3 757.5 V752.8 Q326.7 750.2 326.7 746.8 Q326.7 740.8 334 740.8 Q340.9 740.8 341.5 746.5 L343.6 750.1 L341.8 750.9 V753.4 Q341.8 755 340.2 755 H337.6 V757.5" fill="none" stroke="#1e1e1e" stroke-width="1.6" stroke-linecap="round" stroke-linejoin="round"/>
<path d="M333.28 744.65 L333.19 743.63 L335.21 743.63 L335.12 744.65 L336.12 745.22 L336.96 744.64 L337.97 746.39 L337.04 746.83 L337.04 747.97 L337.97 748.41 L336.96 750.16 L336.12 749.58 L335.12 750.15 L335.21 751.17 L333.19 751.17 L333.28 750.15 L332.28 749.58 L331.44 750.16 L330.43 748.41 L331.36 747.97 L331.36 746.83 L330.43 746.39 L331.44 744.64 L332.28 745.22 Z" fill="#1e1e1e" stroke="#1e1e1e" stroke-width="0.6"/>
<circle cx="334.2" cy="747.4" r="1.2" fill="#fff"/>
<path d="M327 779 V791.8 Q327 792.6 327.8 792.6 H343.4" fill="none" stroke="#1e1e1e" stroke-width="1.6" stroke-linecap="round" stroke-linejoin="round"/>
<circle cx="331.3" cy="788.6" r="0.95" fill="#1e1e1e"/>
<circle cx="333.2" cy="782" r="0.95" fill="#1e1e1e"/>
<circle cx="336.8" cy="785.3" r="0.95" fill="#1e1e1e"/>
<circle cx="340.3" cy="781.7" r="0.95" fill="#1e1e1e"/>
<circle cx="339.6" cy="789" r="0.95" fill="#1e1e1e"/>
<path d="M324.2 821.6 H346.6 M328.4 818 V821.6 M341.8 818 V821.6 M335 821.6 V824.8" fill="none" stroke="#1e1e1e" stroke-width="1.6" stroke-linecap="round" stroke-linejoin="round"/>
<circle cx="328.4" cy="816" r="2" fill="none" stroke="#1e1e1e" stroke-width="1.5" stroke-linecap="round" stroke-linejoin="round"/><circle cx="341.8" cy="816" r="2" fill="none" stroke="#1e1e1e" stroke-width="1.5" stroke-linecap="round" stroke-linejoin="round"/><circle cx="335" cy="826.9" r="2.1" fill="none" stroke="#1e1e1e" stroke-width="1.5" stroke-linecap="round" stroke-linejoin="round"/>
<path d="M329.6 851.2 H341.3 Q342.9 851.2 342.9 852.8 V860.2 L337.9 865.2 H329.6 Q328 865.2 328 863.6 V852.8 Q328 851.2 329.6 851.2 Z" fill="none" stroke="#1e1e1e" stroke-width="1.6" stroke-linecap="round" stroke-linejoin="round"/>
<path d="M342.9 860 H339.3 Q338 860 338 861.3 V865.2 Z" fill="#1e1e1e" stroke="#1e1e1e" stroke-width="1.2" stroke-linejoin="round"/>
<circle cx="331.2" cy="854.6" r="0.9" fill="#1e1e1e"/>
<circle cx="331.2" cy="858.1" r="0.9" fill="#1e1e1e"/>
<circle cx="331.2" cy="861.6" r="0.9" fill="#1e1e1e"/>
<path d="M327.4 886.4 V899.6 Q327.4 900.4 328.2 900.4 H343.6" fill="none" stroke="#1e1e1e" stroke-width="1.7" stroke-linecap="round" stroke-linejoin="round"/>
<path d="M330.6 894.1 L333.6 890.7 L336.7 893.6 L341.6 888.3 M339.6 887.6 H342.3 V890.3" fill="none" stroke="#1e1e1e" stroke-width="1.6" stroke-linecap="round" stroke-linejoin="round"/>
<path d="M339.4 894.4 L342.2 897.2 M339.6 897.4 H342.3 V894.8" fill="none" stroke="#1e1e1e" stroke-width="1.6" stroke-linecap="round" stroke-linejoin="round"/></svg>
<svg class="r" style="left:470px;top:480px;" width="110" height="92" viewBox="0 0 110 92"><path d="M3 87.6 L33.2 24.1 A38 38 0 1 1 72.6 78.2 Z" fill="#0ba5ec"/></svg>
<svg class="r" style="left:0;top:0" width="700" height="700"><path d="M535.6 502.2 H540.2 V537 H535.6 Z M526.2 507.8 L537.2 502.2 L537.6 506.4 L527.4 511.2 Z" fill="#fff"/></svg>
</div></body></html>
